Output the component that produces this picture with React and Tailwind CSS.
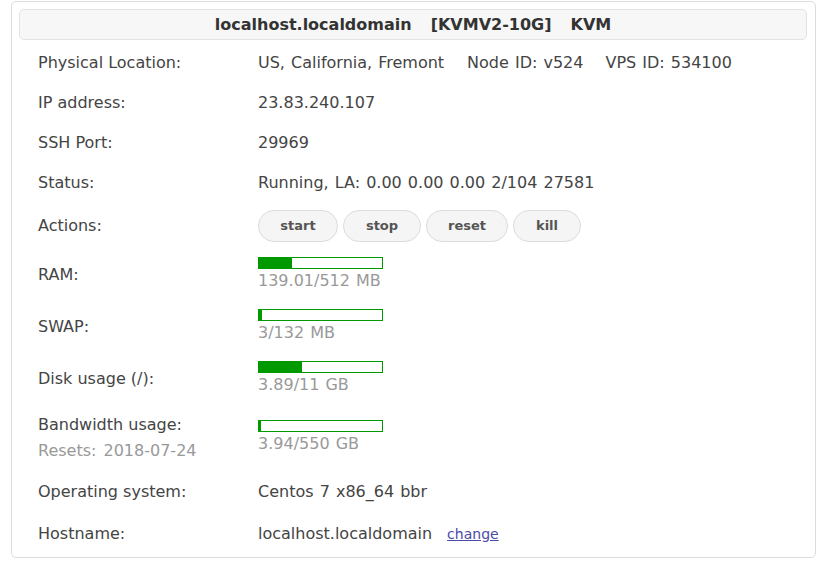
const usage = [
  { label: 'RAM:', used: 139.01, total: 512, text: '139.01/512 MB', h: 'h-[52px]' },
  { label: 'SWAP:', used: 3, total: 132, text: '3/132 MB', h: 'h-[52px]' },
  { label: 'Disk usage (/):', used: 3.89, total: 11, text: '3.89/11 GB', h: 'h-[52px]' },
]

const actions = [
  { name: 'start', w: 'w-[80px]' },
  { name: 'stop', w: 'w-[78px]' },
  { name: 'reset', w: 'w-[82px]' },
  { name: 'kill', w: 'w-[68px]' },
]

function Bar({ used, total, text }) {
  const pct = Math.max((used / total) * 100, 2)
  return (
    <div>
      <div className="w-[125px] h-[12px] border border-[#009900] bg-white">
        <div className="h-full bg-[#009900]" style={{ width: pct + '%' }}></div>
      </div>
      <div className="text-[#999] leading-[24px] [word-spacing:1px]">{text}</div>
    </div>
  )
}

function Row({ label, h = 'h-[40px]', children }) {
  return (
    <div className={'flex items-center ' + h}>
      <div className="w-[220px] shrink-0">{label}</div>
      <div className="flex items-center [word-spacing:1px]">{children}</div>
    </div>
  )
}

export default function App() {
  return (
    <div className="w-[830px] h-[565px] bg-white pt-[1px] font-['DejaVu_Sans',sans-serif] text-[16px] text-[#444]">
      <div className="ml-[11px] w-[805px] h-[557px] border border-[#dcdcdc] rounded-[5px] pl-[7px] pr-[8px] pt-[7px]">
        {/* title bar */}
        <div className="h-[31px] bg-[#f7f7f7] border border-[#e3e3e3] rounded-[5px] flex items-center justify-center gap-[19px] font-bold text-[#333]">
          <span>localhost.localdomain</span>
          <span>[KVMV2-10G]</span>
          <span>KVM</span>
        </div>

        <div className="pl-[19px] pt-[3px]">
          <Row label="Physical Location:">
            <span>US, California, Fremont</span>
            <span className="ml-[23px]">Node ID: v524</span>
            <span className="ml-[22px]">VPS ID: 534100</span>
          </Row>
          <Row label="IP address:">23.83.240.107</Row>
          <Row label="SSH Port:">29969</Row>
          <Row label="Status:">Running, LA: 0.00 0.00 0.00 2/104 27581</Row>
          <Row label="Actions:" h="h-[46px]">
            <div className="flex gap-[5px] [word-spacing:0]">
              {actions.map((a) => (
                <button
                  key={a.name}
                  className={a.w + ' h-[32px] rounded-full bg-[#f5f5f5] border border-[#dcdcdc] font-bold text-[13px] text-[#555]'}
                >
                  {a.name}
                </button>
              ))}
            </div>
          </Row>
          {usage.map((u) => (
            <Row key={u.label} label={u.label} h={u.h}>
              <Bar {...u} />
            </Row>
          ))}
          <Row
            label={
              <div className="leading-[26px]">
                <div>Bandwidth usage:</div>
                <div className="text-[#999] [word-spacing:2px]">Resets: 2018-07-24</div>
              </div>
            }
            h="h-[66px]"
          >
            <Bar used={3.94} total={550} text="3.94/550 GB" />
          </Row>
          <Row label="Operating system:" h="h-[42px]">Centos 7 x86_64 bbr</Row>
          <Row label="Hostname:" h="h-[42px]">
            <span>localhost.localdomain</span>
            <a href="#" className="ml-[15px] text-[14px] text-[#4a4aa8] underline">change</a>
          </Row>
        </div>
      </div>
    </div>
  )
}
